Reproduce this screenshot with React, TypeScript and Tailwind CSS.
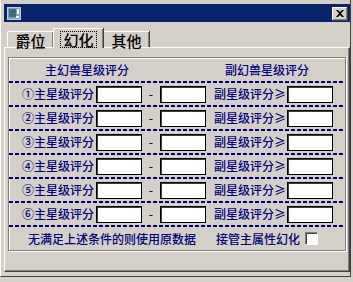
import React from 'react';

const NAVY = 'text-[#000080] font-medium';

const Edit: React.FC = () => (
  <div className="w-[46px] h-[17px] bg-white border border-black shadow-[inset_1px_1px_0_#404040]" />
);

const Dashes: React.FC = () => (
  <div className="h-[2px] w-full bg-[repeating-linear-gradient(90deg,#000080_0px,#000080_4px,transparent_4px,transparent_6px)]" />
);

const circled = ['①', '②', '③', '④', '⑤', '⑥'];

const Row: React.FC<{ n: string }> = ({ n }) => (
  <div className="flex h-[22px] items-center">
    <div className={`w-[85px] text-right ${NAVY}`}>{n}主星级评分</div>
    <div className="ml-[2px]">
      <Edit />
    </div>
    <div className={`w-[18px] text-center ${NAVY}`}>-</div>
    <Edit />
    <div className={`w-[81px] text-right pr-[1px] ${NAVY}`}>副星级评分≥</div>
    <Edit />
  </div>
);

const Tab: React.FC<{ label: string; active?: boolean }> = ({ label, active }) =>
  active ? (
    <div className="relative z-10 -mb-[1px] h-[20px] w-[50px] bg-[#d4d0c8] border-l border-t border-white rounded-tl-[2px] shadow-[inset_-1px_0_0_#808080,1px_0_0_#404040] flex items-start justify-center pt-[2px]">
      <div className="border border-dotted border-black px-[2px] h-[17px] leading-[15px] text-[15px] font-medium">{label}</div>
    </div>
  ) : (
    <div className="h-[16px] w-[46px] border-l border-t border-white rounded-tl-[2px] shadow-[inset_-1px_0_0_#808080,1px_0_0_#404040] flex items-center justify-center pt-[2px] text-[15px] font-medium">
      {label}
    </div>
  );

export default function App() {
  return (
    <div
      className="w-[353px] h-[282px] bg-[#d4d0c8] overflow-hidden text-[12px] leading-none text-black"
      style={{ fontFamily: '"Noto Sans CJK SC", "Noto Sans", sans-serif' }}
    >
      <div className="w-[351px] h-[277px] pl-[3px] pt-[4px] pr-[1px] border-l border-white border-r border-r-[#404040] border-b border-b-[#404040]">
        <div className="w-[346px]">
          {/* title bar */}
          <div className="h-[18px] bg-[#0a246a] flex items-center justify-between pl-[3px] pr-[3px]">
            <svg width="14" height="13" viewBox="0 0 14 13">
              <rect x="0.5" y="0.5" width="13" height="12" fill="#7fa3b0" stroke="#c0d0d8" />
              <rect x="2" y="2" width="7" height="8" fill="#3a6e78" />
              <rect x="10" y="2" width="2" height="5" fill="#ffffff" />
              <rect x="9" y="9" width="3" height="2" fill="#ffffff" />
            </svg>
            <div className="w-[15px] h-[13px] bg-[#d4d0c8] border-t border-l border-white shadow-[1px_1px_0_#404040,inset_-1px_-1px_0_#808080] flex items-center justify-center">
              <svg width="8" height="7" viewBox="0 0 8 7">
                <path d="M0 0 L2 0 L4 2 L6 0 L8 0 L5 3.5 L8 7 L6 7 L4 5 L2 7 L0 7 L3 3.5 Z" fill="#000" />
              </svg>
            </div>
          </div>

          {/* tabs */}
          <div className="h-[25px] flex items-end pl-[3px]">
            <Tab label="爵位" />
            <Tab label="幻化" active />
            <Tab label="其他" />
          </div>

          {/* tab panel */}
          <div className="h-[225px] border-t border-l border-white border-r border-r-[#404040] border-b border-b-[#404040] shadow-[inset_-1px_-1px_0_#808080] pt-[9px] px-[3px]">
            <div className="h-[194px] border border-[#808080] shadow-[inset_1px_1px_0_#ffffff,1px_1px_0_#ffffff]">
              <div className="flex h-[23px] items-center">
                <div className={`w-[156px] text-center ${NAVY}`}>主幻兽星级评分</div>
                <div className={`ml-[60px] ${NAVY}`}>副幻兽星级评分</div>
              </div>
              <Dashes />
              {circled.map((n) => (
                <React.Fragment key={n}>
                  <Row n={n} />
                  <Dashes />
                </React.Fragment>
              ))}
              <div className="flex h-[23px] items-center">
                <div className={`ml-[19px] ${NAVY}`}>无满足上述条件的则使用原数据</div>
                <div className={`ml-[20px] ${NAVY}`}>接管主属性幻化</div>
                <div className="ml-[5px] w-[13px] h-[13px] bg-white border-t border-l border-[#808080] border-r border-b border-r-white border-b-white shadow-[inset_1px_1px_0_#404040]" />
              </div>
            </div>
          </div>
        </div>
      </div>
    </div>
  );
}
